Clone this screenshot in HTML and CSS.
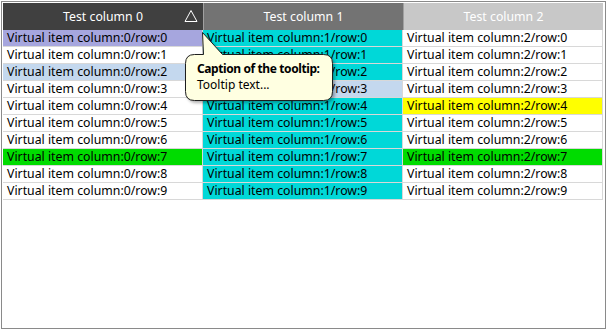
FILE: index.html
```html
<!DOCTYPE html>
<html>
<head>
<meta charset="utf-8">
<link rel="stylesheet" href="styles.css">
</head>
<body>
<div class="frame">
  <div class="header">
    <div class="hcell h0">Test column 0
      <svg class="sort" width="14" height="14" viewBox="0 0 14 14"><path d="M7 1.5 L13 12.5 L1 12.5 Z" fill="none" stroke="#fff" stroke-width="1"/></svg>
    </div>
    <div class="hcell h1">Test column 1</div>
    <div class="hcell h2">Test column 2</div>
  </div>
  <div class="rows">
    <div class="cell sel">Virtual item column:0/row:0</div><div class="cell cy">Virtual item column:1/row:0</div><div class="cell">Virtual item column:2/row:0</div>
    <div class="cell">Virtual item column:0/row:1</div><div class="cell cy">Virtual item column:1/row:1</div><div class="cell">Virtual item column:2/row:1</div>
    <div class="cell lb">Virtual item column:0/row:2</div><div class="cell cy">Virtual item column:1/row:2</div><div class="cell">Virtual item column:2/row:2</div>
    <div class="cell">Virtual item column:0/row:3</div><div class="cell lb">Virtual item column:1/row:3</div><div class="cell">Virtual item column:2/row:3</div>
    <div class="cell">Virtual item column:0/row:4</div><div class="cell cy">Virtual item column:1/row:4</div><div class="cell ye">Virtual item column:2/row:4</div>
    <div class="cell">Virtual item column:0/row:5</div><div class="cell cy">Virtual item column:1/row:5</div><div class="cell">Virtual item column:2/row:5</div>
    <div class="cell">Virtual item column:0/row:6</div><div class="cell cy">Virtual item column:1/row:6</div><div class="cell">Virtual item column:2/row:6</div>
    <div class="cell gr">Virtual item column:0/row:7</div><div class="cell cy">Virtual item column:1/row:7</div><div class="cell gr">Virtual item column:2/row:7</div>
    <div class="cell">Virtual item column:0/row:8</div><div class="cell cy">Virtual item column:1/row:8</div><div class="cell">Virtual item column:2/row:8</div>
    <div class="cell">Virtual item column:0/row:9</div><div class="cell cy">Virtual item column:1/row:9</div><div class="cell">Virtual item column:2/row:9</div>
  </div>
</div>
<svg class="balloon" width="608" height="331" viewBox="0 0 608 331">
  <path d="M194.5 54.5 L203.5 54.5 L202.5 32.5 L222.5 54.5 L323.5 54.5 Q332.5 54.5 332.5 63.5 L332.5 91.5 Q332.5 100.5 323.5 100.5 L194.5 100.5 Q185.5 100.5 185.5 91.5 L185.5 63.5 Q185.5 54.5 194.5 54.5 Z" fill="#ffffe1" stroke="#1e1e1e" stroke-width="1"/>
</svg>
<div class="tip">
  <div class="tip-title">Caption of the tooltip:</div>
  <div class="tip-text">Tooltip text...</div>
</div>
</body>
</html>
```
FILE: styles.css
```css
html, body {
  margin: 0;
  padding: 0;
  background: #fff;
  font-family: "Noto Sans", "Open Sans", sans-serif;
  font-size: 12.3px;
  color: #000;
}
.frame {
  box-sizing: border-box;
  margin: 1px 0 0 1px;
  width: 605px;
  height: 328px;
  border: 1px solid #8a8a8a;
  padding: 1px;
}
.header {
  display: grid;
  grid-template-columns: 201px 200px 199px;
  height: 27px;
}
.hcell {
  position: relative;
  display: flex;
  align-items: center;
  justify-content: center;
  color: #fff;
  border-right: 1px solid #a0a0a0;
  line-height: 26px;
}
.h0 { background: #404040; }
.h1 { background: #737373; }
.h2 { background: #c8c8c8; border-right: none; }
.sort {
  position: absolute;
  right: 5px;
  top: 6px;
}
.rows {
  display: grid;
  grid-template-columns: 200px 200px 200px;
}
.cell {
  box-sizing: border-box;
  height: 17px;
  line-height: 16px;
  padding-left: 4px;
  border-bottom: 1px solid #d8d8d8;
  border-right: 1px solid #d8d8d8;
  white-space: nowrap;
  overflow: hidden;
}
.sel { background: #a6a6de; }
.cy { background: #00d8d8; }
.lb { background: #c4d8ee; }
.ye { background: #ffff00; }
.gr { background: #00dc00; }
.balloon {
  position: absolute;
  left: 0;
  top: 0;
  pointer-events: none;
  filter: drop-shadow(2px 2px 1.5px rgba(0,0,0,0.3));
}
.tip {
  position: absolute;
  left: 197px;
  top: 61px;
  line-height: 16px;
  font-size: 12px;
}
.tip-title {
  font-weight: bold;
  letter-spacing: -0.4px;
}
```
